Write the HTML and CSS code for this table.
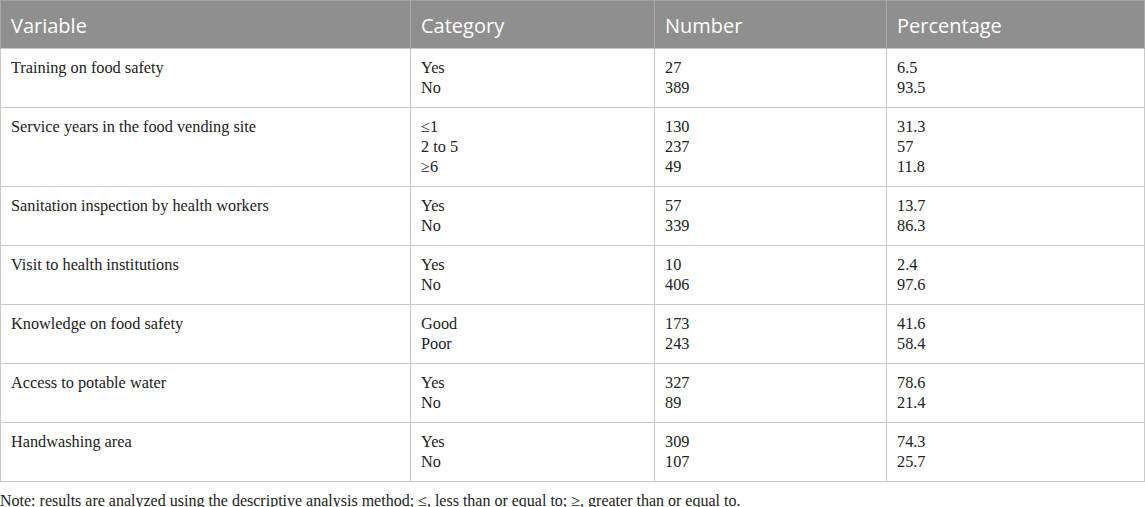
FILE: index.html
```html
<!DOCTYPE html>
<html>
<head>
<meta charset="utf-8">
<link rel="stylesheet" href="styles.css">
</head>
<body>
<table class="data">
  <colgroup>
    <col class="c1"><col class="c2"><col class="c3"><col class="c4">
  </colgroup>
  <thead>
    <tr><th>Variable</th><th>Category</th><th>Number</th><th>Percentage</th></tr>
  </thead>
  <tbody>
    <tr><td>Training on food safety</td><td>Yes<br>No</td><td>27<br>389</td><td>6.5<br>93.5</td></tr>
    <tr><td>Service years in the food vending site</td><td>≤1<br>2 to 5<br>≥6</td><td>130<br>237<br>49</td><td>31.3<br>57<br>11.8</td></tr>
    <tr><td>Sanitation inspection by health workers</td><td>Yes<br>No</td><td>57<br>339</td><td>13.7<br>86.3</td></tr>
    <tr><td>Visit to health institutions</td><td>Yes<br>No</td><td>10<br>406</td><td>2.4<br>97.6</td></tr>
    <tr><td>Knowledge on food safety</td><td>Good<br>Poor</td><td>173<br>243</td><td>41.6<br>58.4</td></tr>
    <tr><td>Access to potable water</td><td>Yes<br>No</td><td>327<br>89</td><td>78.6<br>21.4</td></tr>
    <tr><td>Handwashing area</td><td>Yes<br>No</td><td>309<br>107</td><td>74.3<br>25.7</td></tr>
  </tbody>
</table>
<p class="note">Note: results are analyzed using the descriptive analysis method; ≤, less than or equal to; ≥, greater than or equal to.</p>
</body>
</html>
```

FILE: styles.css
```css
html, body {
  margin: 0;
  padding: 0;
  background: #ffffff;
}

.data {
  border-collapse: collapse;
  table-layout: fixed;
  width: 1144px;
  font-family: "Liberation Serif", "Times New Roman", serif;
  font-size: 16.3px;
  color: #222222;
}

.c1 { width: 410px; }
.c2 { width: 244px; }
.c3 { width: 232px; }
.c4 { width: 258px; }

.data th {
  background: #8f8f8f;
  color: #ffffff;
  font-family: "Open Sans", "Lato", sans-serif;
  font-weight: normal;
  font-size: 20px;
  text-align: left;
  height: 48px;
  padding: 2px 10px 0 10px;
  box-sizing: border-box;
  border-left: 1px solid #a9a9a9;
  border-right: 1px solid #a9a9a9;
  border-top: 1px solid #a2a2a2;
  vertical-align: middle;
}

.data td {
  padding: 9px 10px 9px 10px;
  line-height: 20px;
  vertical-align: top;
  border: 1px solid #c9c9c9;
}

.note {
  margin: 10px 0 0 0;
  font-family: "Liberation Serif", "Times New Roman", serif;
  font-size: 16px;
  line-height: 18px;
  color: #222222;
  white-space: nowrap;
}
```
